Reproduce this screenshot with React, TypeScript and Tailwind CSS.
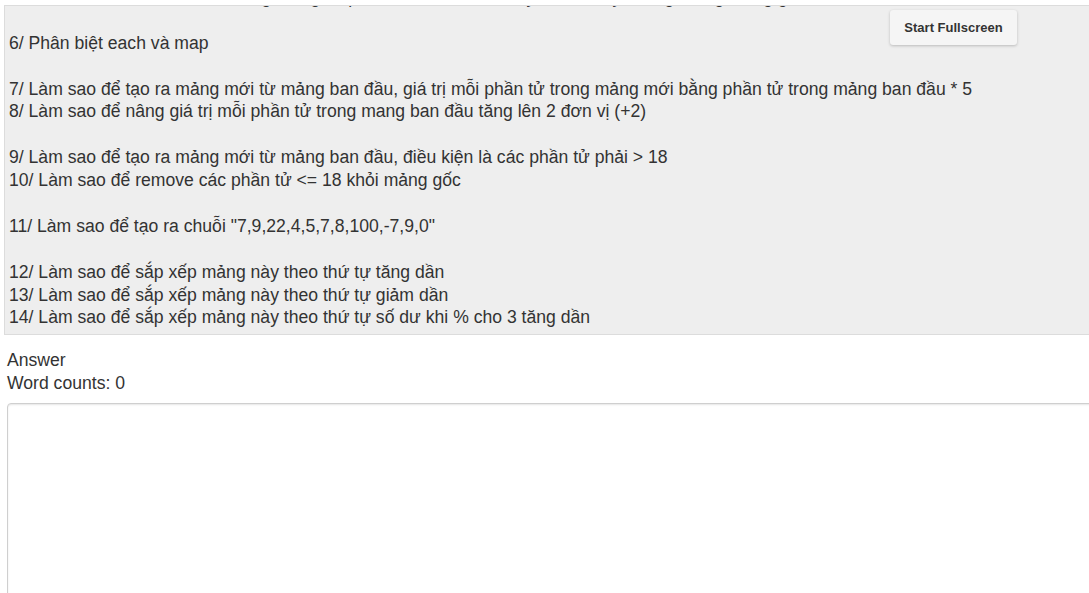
import React from "react";

const lines: string[] = [
  "5/ Làm sao để kiểm tra xem trong mảng có phần tử nào thỏa mãn yêu cầu hay không, trong mảng gốc",
  "",
  "6/ Phân biệt each và map",
  "",
  "7/ Làm sao để tạo ra mảng mới từ mảng ban đầu, giá trị mỗi phần tử trong mảng mới bằng phần tử trong mảng ban đầu * 5",
  "8/ Làm sao để nâng giá trị mỗi phần tử trong mang ban đầu tăng lên 2 đơn vị (+2)",
  "",
  "9/ Làm sao để tạo ra mảng mới từ mảng ban đầu, điều kiện là các phần tử phải > 18",
  "10/ Làm sao để remove các phần tử <= 18 khỏi mảng gốc",
  "",
  "11/ Làm sao để tạo ra chuỗi \"7,9,22,4,5,7,8,100,-7,9,0\"",
  "",
  "12/ Làm sao để sắp xếp mảng này theo thứ tự tăng dần",
  "13/ Làm sao để sắp xếp mảng này theo thứ tự giảm dần",
  "14/ Làm sao để sắp xếp mảng này theo thứ tự số dư khi % cho 3 tăng dần",
];

export default function App() {
  return (
    <div
      className="relative w-[1089px] h-[593px] overflow-hidden bg-white text-[17.6px] leading-[23px] text-[#333]"
      style={{ fontFamily: '"Liberation Sans", Arial, sans-serif' }}
    >
      <div className="pt-[5px] pl-[4px]">
        <div className="w-[1100px] h-[330px] overflow-hidden border border-[#dcdcdc] bg-[#eeeeee]">
          <div className="mt-[-20px] pl-[4px] whitespace-pre leading-[22.9px]">
            {lines.map((l, i) => (
              <div key={i} className="h-[22.9px]">
                {l === "" ? "\u00a0" : l}
              </div>
            ))}
          </div>
        </div>
      </div>

      <button className="absolute left-[890px] top-[10px] w-[127px] h-[35px] rounded-[3px] bg-[#f5f5f5] text-[13px] leading-[15px] font-bold text-[#333] shadow-[0_1px_3px_rgba(0,0,0,0.22)]">
        Start Fullscreen
      </button>

      <div className="pl-[7px] pt-[14px]">
        <div>Answer</div>
        <div>Word counts: 0</div>
        <textarea className="mt-[8px] block w-[1100px] h-[220px] rounded-[4px] border border-[#cfcfcf] bg-white shadow-[inset_0_1px_2px_rgba(0,0,0,0.1)] outline-none resize-none" />
      </div>
    </div>
  );
}
